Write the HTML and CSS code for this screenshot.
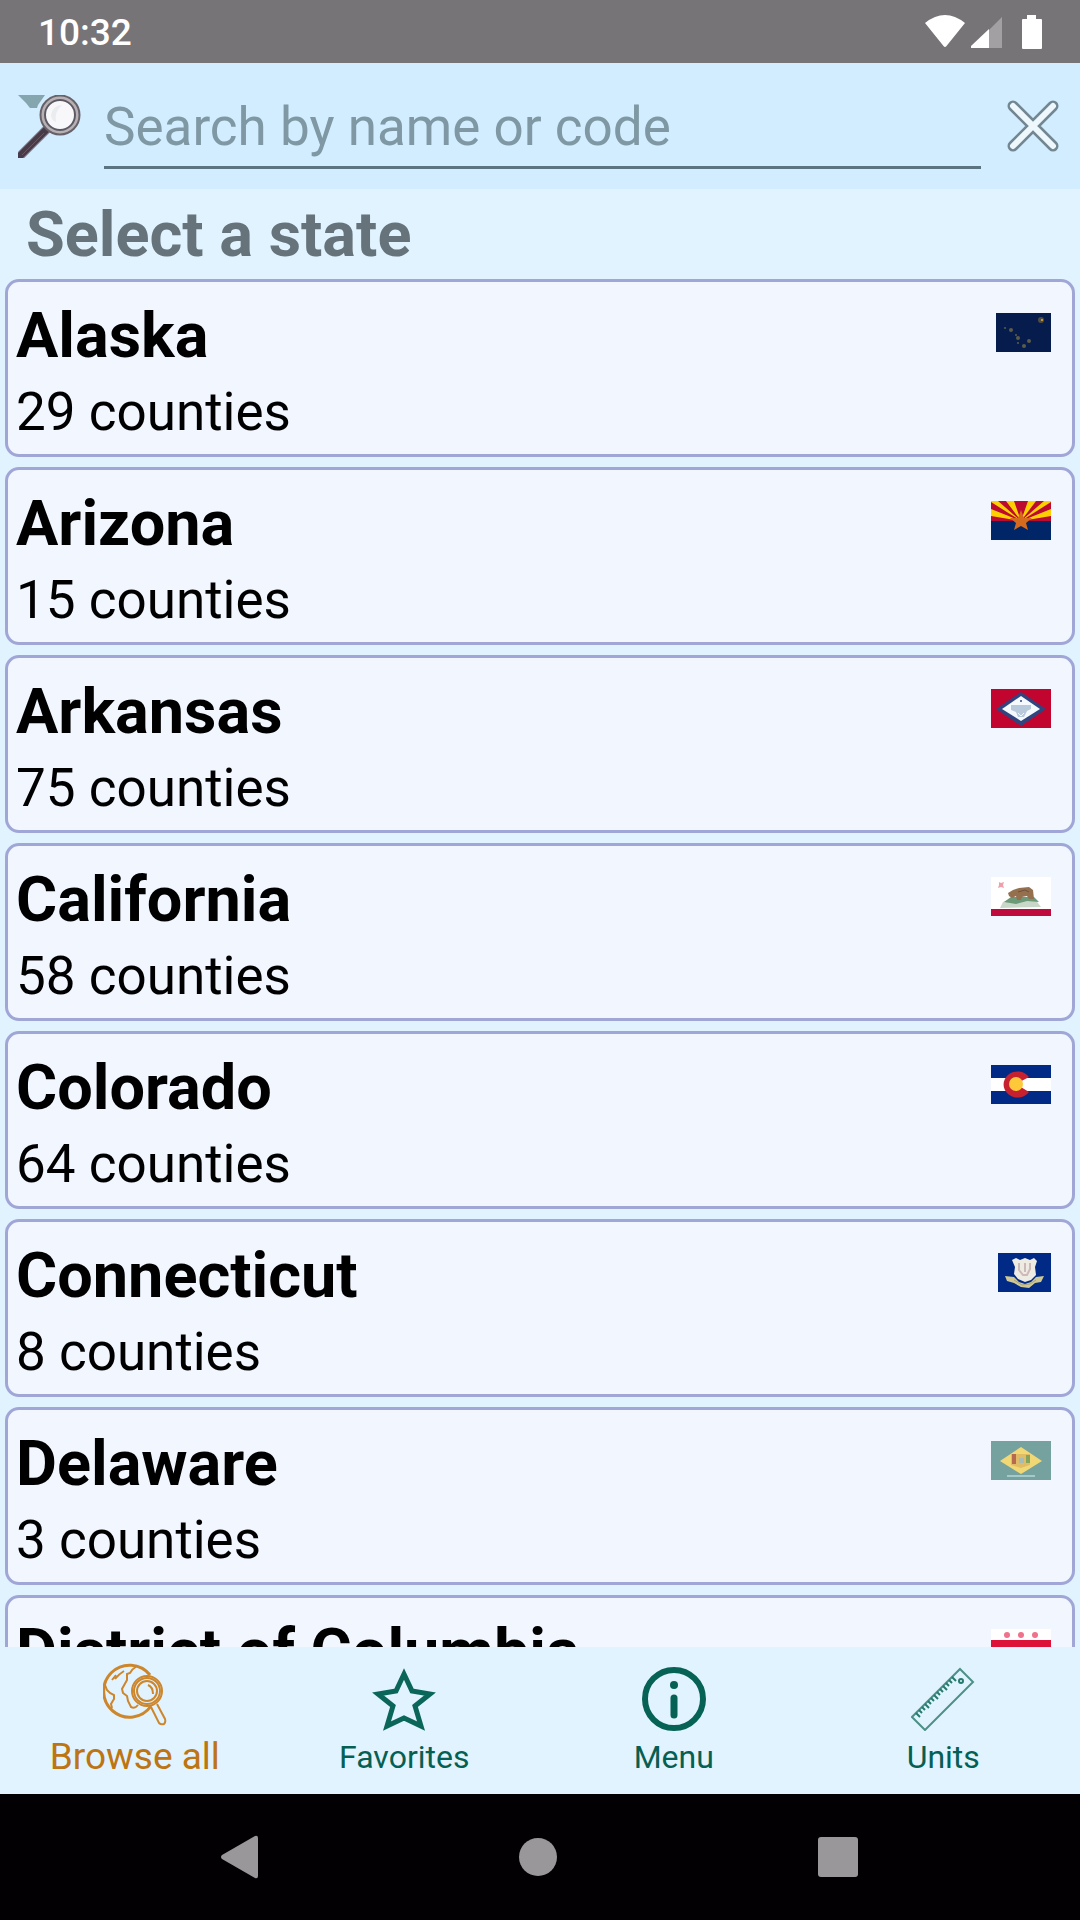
FILE: index.html
```html
<!DOCTYPE html>
<html lang="en">
<head>
<meta charset="utf-8">
<meta name="viewport" content="width=device-width, initial-scale=1">
<title>Select a state</title>
<link rel="stylesheet" href="styles.css">
</head>
<body>
<div class="status">
  <time class="clock">10:32</time>
  <div class="status-icons">
    <svg width="40" height="34" viewBox="0 0 40 34" fill="#fff" aria-hidden="true"><path d="M0 8Q20 -8 40 8L21.500 31Q20 33 18.500 31Z"/></svg>
    <svg width="32" height="34" viewBox="0 0 32 34" aria-hidden="true"><path d="M18 15 31 2V33H18Z" fill="#a3a0a4"/><path d="M18 14V33H0V31Z" fill="#fff"/></svg>
    <svg class="battery" width="20" height="34" viewBox="0 0 20 34" fill="#fff" aria-hidden="true"><path d="M5 0H14V4H19Q20 4 20 5V33Q20 34 19 34H1Q0 34 0 33V5Q0 4 1 4H5Z"/></svg>
  </div>
</div>

<form class="search" role="search">
  <svg class="search-icon" viewBox="0 0 63 63" aria-hidden="true">
    <path d="M0 0H27L20 10 19 13H12L8 8Z" fill="#86a6af"/>
    <path d="M29 34 1 62" stroke="#8d8794" stroke-width="9"/>
    <path d="M29 34 0 63" stroke="#463b49" stroke-width="7"/>
    <path d="M26 38 4 60" stroke="#6d5662" stroke-width="1"/>
    <circle cx="42" cy="20" r="19" fill="#fafafa" stroke="#67616a" stroke-width="3"/>
    <circle cx="42" cy="20" r="17" fill="none" stroke="#b8b1b4" stroke-width="3"/>
    <circle cx="42" cy="20" r="15" fill="#f8f8fa" stroke="#5d5964" stroke-width="2"/>
    <path d="M33 20Q35 10 44 10Q36 17 38 27Q34 26 33 20Z" fill="#ebecef"/>
  </svg>
  <input class="search-input" type="text" placeholder="Search by name or code" aria-label="Search by name or code">
  <button class="clear" type="button" aria-label="Clear">
    <svg width="52" height="52" viewBox="0 0 52 52" aria-hidden="true">
      <path d="M6 6 46 46M46 6 6 46" stroke="#728792" stroke-width="11" stroke-linecap="round"/>
      <path d="M6 6 46 46M46 6 6 46" stroke="#eef8fc" stroke-width="6" stroke-linecap="round"/>
    </svg>
  </button>
</form>

<main class="content">
  <h1 class="title">Select a state</h1>
  <ul class="states">
    <li class="card">
      <div><h2 class="name">Alaska</h2><p class="count">29 counties</p></div>
      <svg class="flag" width="55" height="39" viewBox="0 0 55 39" aria-hidden="true">
        <path d="M0 0H55V39H0Z" fill="#051c4d"/>
        <g fill="#5d5c49"><circle cx="9" cy="15" r="1"/><circle cx="15" cy="17" r="2"/><circle cx="20" cy="22" r="1"/><circle cx="22" cy="25" r="2"/><circle cx="22" cy="30" r="1"/><circle cx="28" cy="33" r="2"/><circle cx="33" cy="28" r="2"/></g>
        <circle cx="45" cy="7" r="3" fill="#524c3f"/><circle cx="46" cy="7" r="1" fill="#e6ad38"/>
      </svg>
    </li>
    <li class="card">
      <div><h2 class="name">Arizona</h2><p class="count">15 counties</p></div>
      <svg class="flag" width="60" height="39" viewBox="0 0 60 39" aria-hidden="true">
        <path d="M0 0H60V20H0Z" fill="#bd0a30"/>
        <path d="M30 20 0 15V8ZM30 20 0 1V0H7ZM30 20 15 0H23ZM30 20 37 0H45ZM30 20 53 0H60V1ZM30 20 60 8V15Z" fill="#fed002"/>
        <path d="M0 20H60V39H0Z" fill="#002667"/>
        <path d="M30 9 33 17H41L35 22 37 29 30 25 23 29 25 22 19 17H27Z" fill="#d36a1d"/>
      </svg>
    </li>
    <li class="card">
      <div><h2 class="name">Arkansas</h2><p class="count">75 counties</p></div>
      <svg class="flag" width="60" height="39" viewBox="0 0 60 39" aria-hidden="true">
        <path d="M0 0H60V39H0Z" fill="#c1052f"/>
        <path d="M5 20 30 3 55 20 30 37Z" fill="#32447e"/>
        <path d="M11 20 30 7 49 20 30 32Z" fill="#f5faff"/>
        <path d="M20 16H40V20L36 22 33 28H27L25 23 20 21Z" fill="#b9cadc"/>
        <g fill="#32447e"><circle cx="30" cy="12" r="1"/></g>
        <path d="M27 24 30 27 33 24" stroke="#f5faff" fill="none"/>
      </svg>
    </li>
    <li class="card">
      <div><h2 class="name">California</h2><p class="count">58 counties</p></div>
      <svg class="flag" width="60" height="39" viewBox="0 0 60 39" aria-hidden="true">
        <path d="M0 0H60V39H0Z" fill="#fff"/>
        <path d="M0 32H60V39H0Z" fill="#be0a3c"/>
        <path d="M9 31 12 25 20 22H44L50 30Z" fill="#c9d7c8"/>
        <path d="M13 25 20 20H43L48 25 36 24 25 27Z" fill="#6c9a78"/>
        <path d="M17 16 22 13 28 11 38 10 42 13 43 22H38L36 19 31 20 30 23H26L25 19 21 21 18 19Z" fill="#94704f"/>
        <path d="M27 15 34 13 38 15" stroke="#6e4f3c" fill="none"/>
        <path d="M8 5 10 6 13 5 12 8 13 11 10 10 7 11 8 8Z" fill="#ee9fac"/>
      </svg>
    </li>
    <li class="card">
      <div><h2 class="name">Colorado</h2><p class="count">64 counties</p></div>
      <svg class="flag" width="60" height="39" viewBox="0 0 60 39" aria-hidden="true">
        <path d="M0 0H60V39H0Z" fill="#002a86"/>
        <path d="M0 13H60V26H0Z" fill="#fff"/>
        <path d="M25 19 38 12A14 13 0 1 0 38 27Z" fill="#c7202f"/>
        <path d="M25 19 38 13V26Z" fill="#fff"/>
        <circle cx="25" cy="19" r="7" fill="#fdc93b"/>
      </svg>
    </li>
    <li class="card">
      <div><h2 class="name">Connecticut</h2><p class="count">8 counties</p></div>
      <svg class="flag" width="53" height="39" viewBox="0 0 53 39" aria-hidden="true">
        <path d="M0 0H53V39H0Z" fill="#002a86"/>
        <path d="M14 7 18 5 22 7 27 5 32 7 36 5 39 8 37 14 38 22 33 27 27 29 20 26 16 21 17 14Z" fill="#eeebe3"/>
        <path d="M21 10V17L25 22H29L32 16V10M27 10V19" stroke="#cdb9b9" stroke-width="2" fill="none"/>
        <path d="M7 23 16 24 21 29 27 31 33 29 38 24 46 23 43 29 37 30 31 35 23 34 16 30 9 28Z" fill="#cfc893"/>
        <path d="M16 27 24 32 32 31 38 27" stroke="#a5a381" fill="none"/>
      </svg>
    </li>
    <li class="card">
      <div><h2 class="name">Delaware</h2><p class="count">3 counties</p></div>
      <svg class="flag" width="60" height="39" viewBox="0 0 60 39" aria-hidden="true">
        <path d="M0 0H60V39H0Z" fill="#75a29f"/>
        <path d="M9 20 30 6 51 20 30 33Z" fill="#f2d875"/>
        <path d="M20 13H39V24L30 27 20 24Z" fill="#e0bc66"/>
        <path d="M21 13H25V23H21Z" fill="#b86a50"/><path d="M35 14H39V22H35Z" fill="#84a35d"/>
        <path d="M28 17H33V22H28Z" fill="#a6bcb8"/>
        <path d="M16 35H44" stroke="#a4cbc9" stroke-width="2"/>
      </svg>
    </li>
    <li class="card">
      <div><h2 class="name">District of Columbia</h2></div>
      <svg class="flag" width="60" height="39" viewBox="0 0 60 39" aria-hidden="true">
        <path d="M0 0H60V39H0Z" fill="#fff"/>
        <path d="M0 11H60V19H0ZM0 25H60V33H0Z" fill="#dd1238"/>
        <g fill="#f0718b"><circle cx="16" cy="6" r="3"/><circle cx="30" cy="6" r="3"/><circle cx="44" cy="6" r="3"/></g>
      </svg>
    </li>
  </ul>
</main>

<nav class="tabs">
  <a class="tab tab-active" href="#browse">
    <svg class="tab-icon" viewBox="0 0 64 64" fill="none" stroke="#cd862c" stroke-width="2" aria-hidden="true">
      <path d="M48 43A26 26 0 1 1 47 12" stroke-width="3"/>
      <path d="M34 3Q29 6 27 10L24 11 24 17 19 26 20 30 24 33 25 38 28 44Q32 46 35 42M2 22 4 27 7 30 11 32 11 36 8 41 9 45M9 17 13 12M12 16Q16 11 21 8"/>
      <circle cx="44" cy="28" r="15"/><circle cx="44" cy="28" r="13"/><circle cx="44" cy="28" r="10"/>
      <path d="M45 22Q50 24 50 31M48 44 56 60Q58 62 61 61 63 59 62 56L54 41"/>
    </svg>
    <span class="tab-label">Browse all</span>
  </a>
  <a class="tab" href="#favorites">
    <svg class="tab-icon" viewBox="0 0 64 64" fill="none" stroke="#0a6658" stroke-width="5" aria-hidden="true"><path d="M32 7 40 24 58 27 43 39 49 59 32 51 15 59 21 39 6 27 24 24Z"/></svg>
    <span class="tab-label">Favorites</span>
  </a>
  <a class="tab" href="#menu">
    <svg class="tab-icon" viewBox="0 0 64 64" fill="none" stroke="#056254" aria-hidden="true"><circle cx="32" cy="32" r="29" stroke-width="6"/><circle cx="32" cy="18" r="4" fill="#056254" stroke="none"/><path d="M32 31V48" stroke-width="7" stroke-linecap="round"/></svg>
    <span class="tab-label">Menu</span>
  </a>
  <a class="tab" href="#units">
    <svg class="tab-icon" viewBox="0 0 64 64" fill="none" stroke="#4c9087" stroke-width="2" aria-hidden="true"><path d="M49 2 62 15 14 63 1 50Z"/><circle cx="50" cy="14" r="2" stroke="#277a6f"/><path d="M5 46 9 50M8 43 11 46M11 40 14 43M14 37 18 41M17 34 20 37M20 31 23 34M23 28 27 32M26 25 29 28M29 22 32 25M32 19 36 23M35 16 38 19M38 13 41 16M41 10 45 14" stroke="#277a6f"/></svg>
    <span class="tab-label">Units</span>
  </a>
</nav>

<div class="system-nav">
  <button class="system-button" type="button" aria-label="Back"><svg width="42" height="44" viewBox="0 0 42 44" fill="#9a979b" aria-hidden="true"><path d="M38 1Q41 0 41 3V41Q41 44 38 43L5 24Q3 22 5 20Z"/></svg></button>
  <button class="system-button" type="button" aria-label="Home"><svg width="38" height="38" viewBox="0 0 38 38" fill="#9a979b" aria-hidden="true"><circle cx="19" cy="19" r="19"/></svg></button>
  <button class="system-button" type="button" aria-label="Recent apps"><svg width="40" height="40" viewBox="0 0 40 40" fill="#9a979b" aria-hidden="true"><rect width="40" height="40" rx="3"/></svg></button>
</div>
</body>
</html>
```
FILE: styles.css
```css
* {
  box-sizing: border-box;
}

body {
  margin: 0;
  height: 100vh;
  display: flex;
  flex-direction: column;
  overflow: hidden;
  background: #e1f3fe;
  color: #000;
  font-family: Roboto, "Liberation Sans", sans-serif;
}

svg {
  display: block;
  flex: none;
}

button {
  padding: 0;
  border: 0;
  background: none;
}

.status {
  flex: none;
  height: 63px;
  padding: 0 38px;
  display: flex;
  align-items: center;
  justify-content: space-between;
  background: #777477;
  color: #fff;
}

.clock {
  padding-top: 2px;
  font-size: 37px;
  line-height: 44px;
  font-weight: 500;
}

.status-icons {
  display: flex;
  gap: 6px;
}

.battery {
  margin-left: 13px;
}

.search {
  flex: none;
  height: 126px;
  padding: 0 21px 0 18px;
  display: flex;
  align-items: center;
  background: #d1edff;
}

.search-icon {
  width: 63px;
  height: 63px;
}

.search-input {
  flex: 1;
  min-width: 0;
  height: 86px;
  margin: 0 26px 0 23px;
  padding: 12px 0 8px;
  border: 0;
  border-bottom: 3px solid #5c7382;
  outline: 0;
  background: none;
  color: #000;
  font-family: inherit;
  font-size: 53px;
  line-height: 63px;
}

.search-input::placeholder {
  color: #7f98a3;
  opacity: 1;
}

.content {
  flex: 1;
  min-height: 0;
  overflow-y: auto;
  scrollbar-width: none;
}

.title {
  margin: 0;
  padding: 9px 26px 7px;
  color: #66737b;
  font-size: 63px;
  line-height: 74px;
  font-weight: 700;
}

.states {
  margin: 0;
  padding: 0 5px;
  display: grid;
  gap: 10px;
  list-style: none;
}

.card {
  min-height: 178px;
  padding: 17px 21px 10px 8px;
  display: flex;
  align-items: flex-start;
  justify-content: space-between;
  border: 3px solid #a0a7d7;
  border-radius: 14px;
  background: #f1f6ff;
}

.name {
  margin: 0 0 8px;
  font-size: 63px;
  line-height: 74px;
  font-weight: 700;
}

.count {
  margin: 0;
  font-size: 53px;
  line-height: 63px;
}

.flag {
  margin-top: 14px;
}

.tabs {
  flex: none;
  height: 147px;
  padding: 0 2px 15px 0;
  display: grid;
  grid-template-columns: repeat(4, 1fr);
}

.tab {
  display: flex;
  flex-direction: column;
  align-items: center;
  justify-content: flex-end;
  gap: 4px;
  color: #055f52;
  font-size: 32px;
  line-height: 44px;
  text-decoration: none;
}

.tab-active {
  gap: 8px;
  color: #bd7412;
  font-size: 37px;
}

.tab-icon {
  width: 64px;
  height: 64px;
}

.system-nav {
  flex: none;
  height: 126px;
  padding: 0 92px 0 88px;
  display: grid;
  grid-template-columns: repeat(3, 1fr);
  background: #020002;
}

.system-button {
  display: flex;
  align-items: center;
  justify-content: center;
}
```
